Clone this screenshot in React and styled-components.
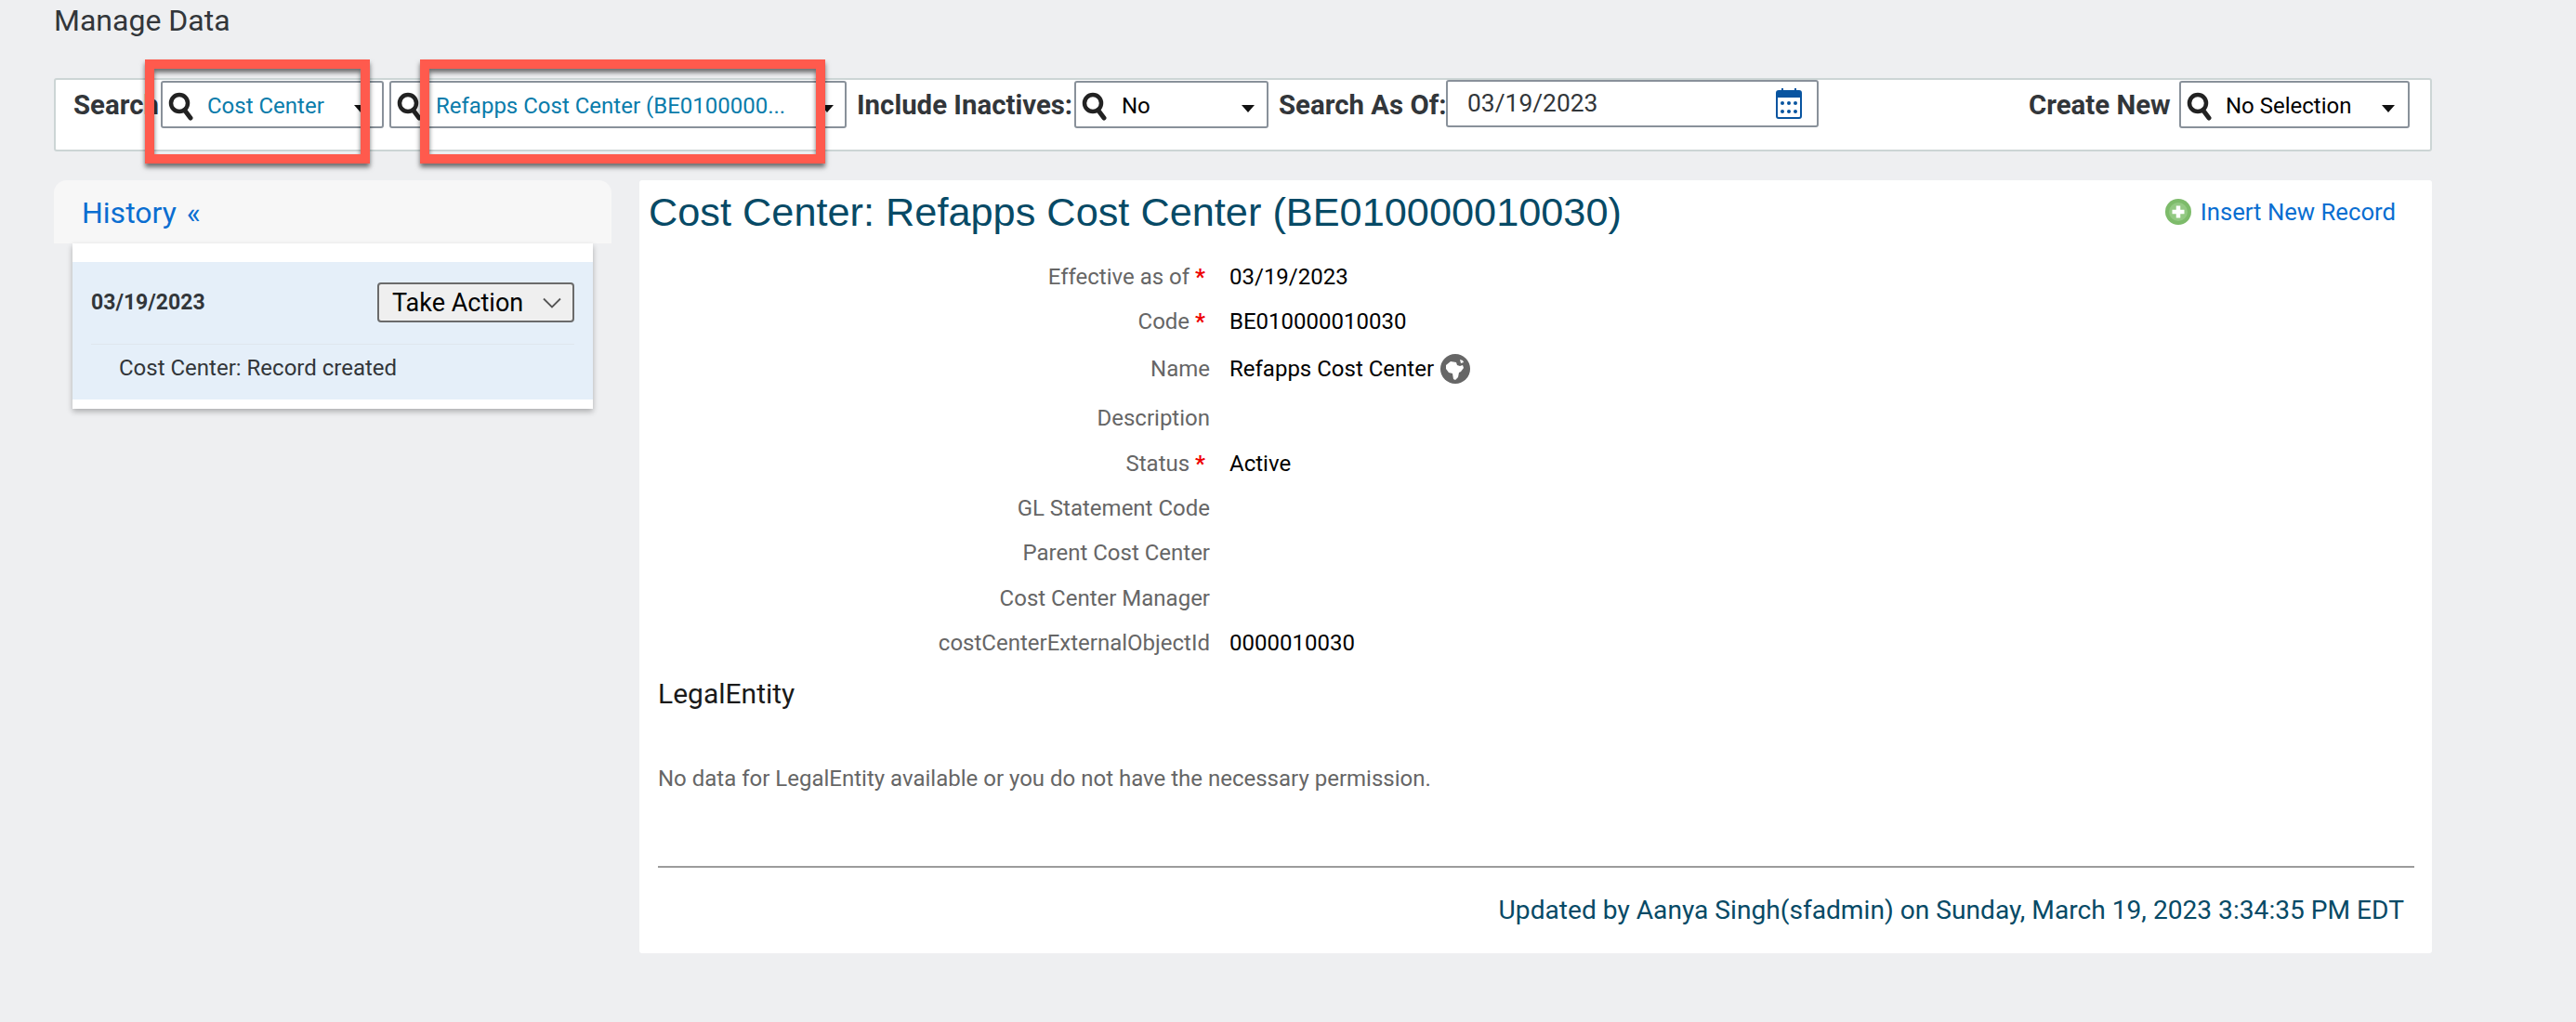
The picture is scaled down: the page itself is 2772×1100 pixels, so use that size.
import React from 'react';
import styled, { createGlobalStyle } from 'styled-components';

const GlobalStyle = createGlobalStyle`
  html, body { margin: 0; padding: 0; background: #eeeff1; }
  body { font-family: Roboto, "Liberation Sans", sans-serif; }
`;

const Page = styled.div`
  width: 2772px;
  height: 1100px;
  position: relative;
  overflow: hidden;
  background: #eeeff1;
`;

const PageTitle = styled.div`
  height: 46px;
  line-height: 45px;
  margin-left: 58px;
  font-size: 32px;
  color: #32363a;
`;

const Toolbar = styled.div`
  box-sizing: border-box;
  width: 2559px;
  height: 79px;
  margin: 38px 0 0 58px;
  padding: 1px 21px 0 19px;
  display: flex;
  align-items: flex-start;
  background: #fff;
  border: 2px solid #ccd5d5;
  border-radius: 3px;
`;

const ToolLabel = styled.div`
  flex: none;
  width: ${p => p.$width}px;
  margin-left: ${p => p.$left || 0}px;
  height: 51px;
  line-height: 53px;
  font-size: 29.4px;
  font-weight: 700;
  color: #32363a;
  white-space: nowrap;
`;

const Select = styled.div`
  flex: none;
  box-sizing: border-box;
  position: relative;
  width: ${p => p.$width}px;
  height: 51px;
  margin-left: ${p => p.$left || 0}px;
  padding: 2px 0 0 ${p => p.$pad}px;
  display: flex;
  align-items: center;
  background: #fff;
  border: 2px solid #89919a;
  border-radius: 3px;
  font-size: 24px;
  color: ${p => (p.$link ? '#0a7cab' : '#000')};
  white-space: nowrap;
`;

const SearchGlass = styled.svg`
  position: absolute;
  left: 6px;
  top: 10px;
  width: 28px;
  height: 31px;
`;

const Caret = styled.span`
  position: absolute;
  right: ${p => p.$right}px;
  top: 24px;
  width: 0;
  height: 0;
  border-left: 7px solid transparent;
  border-right: 7px solid transparent;
  border-top: 8px solid #111;
`;

const DateBox = styled.div`
  flex: none;
  box-sizing: border-box;
  width: 401px;
  height: 51px;
  margin-left: 1px;
  margin-top: -1px;
  padding: 0 16px 1px 21px;
  display: flex;
  align-items: center;
  justify-content: space-between;
  border: 2px solid #89919a;
  border-radius: 3px;
  font-size: 26.4px;
  color: #32363a;
`;

const Columns = styled.div`
  display: flex;
  align-items: flex-start;
  margin: 31px 0 0 58px;
`;

const HistoryColumn = styled.div`
  width: 600px;
  flex: none;
`;

const HistoryHead = styled.div`
  box-sizing: border-box;
  height: 68px;
  padding-left: 30px;
  line-height: 70px;
  font-size: 32px;
  word-spacing: 3px;
  color: #0a6ed1;
  background: #f7f7f7;
  border-radius: 14px 14px 0 0;
`;

const HistoryCard = styled.div`
  margin: 0 20px;
  padding: 20px 0 10px;
  background: #fff;
  box-shadow: 0 3px 6px rgba(0, 0, 0, 0.28);
`;

const HistoryItem = styled.div`
  box-sizing: border-box;
  height: 148px;
  padding: 22px 20px 0;
  background: #e5eff9;
`;

const ItemTop = styled.div`
  display: flex;
  align-items: center;
  justify-content: space-between;
  height: 43px;
  padding-bottom: 23px;
  border-bottom: 1px solid #dfe6ee;
  box-sizing: content-box;
`;

const ItemDate = styled.div`
  font-size: 23px;
  font-weight: 700;
  color: #32363a;
`;

const ActionButton = styled.div`
  box-sizing: border-box;
  width: 212px;
  height: 43px;
  padding: 0 12px 0 14px;
  display: flex;
  align-items: center;
  justify-content: space-between;
  background: #efefef;
  border: 2px solid #6b6b6b;
  border-radius: 4px;
  font-size: 27px;
  color: #000;
`;

const ItemText = styled.div`
  margin: 7px 0 0 30px;
  font-size: 24px;
  line-height: 36px;
  color: #32363a;
`;

const MainPanel = styled.div`
  box-sizing: border-box;
  width: 1929px;
  height: 832px;
  margin-left: 30px;
  padding: 0 19px 0 20px;
  background: #fff;
  border-radius: 3px;
`;

const TitleRow = styled.div`
  display: flex;
  align-items: center;
  justify-content: space-between;
  height: 68px;
  margin-left: -10px;
`;

const RecordTitle = styled.h1`
  margin: 0;
  font-size: 43.3px;
  font-weight: 400;
  color: #074a66;
  font-family: "Liberation Sans", sans-serif;
`;

const InsertLink = styled.div`
  display: flex;
  align-items: center;
  gap: 10px;
  margin-right: 20px;
  font-size: 25.7px;
  color: #0a6ed1;
`;

const FormGrid = styled.div`
  margin: 12px 0 0 -20px;
`;

const FormRow = styled.div`
  display: grid;
  grid-template-columns: 614px auto;
  column-gap: 21px;
  align-items: center;
  height: ${p => p.$height}px;
`;

const FieldLabel = styled.div`
  text-align: right;
  font-size: 24px;
  color: #666;
  padding-right: ${p => (p.$required ? 5 : 0)}px;
`;

const Star = styled.span`
  margin-left: 6px;
  color: #e00;
  font-weight: 700;
`;

const FieldValue = styled.div`
  display: flex;
  align-items: center;
  gap: 7px;
  font-size: 24px;
  color: #000;
`;

const SectionTitle = styled.div`
  margin-top: 10px;
  height: 46px;
  line-height: 46px;
  font-size: 30px;
  color: #1a1a1a;
`;

const EmptyNote = styled.div`
  margin-top: 50px;
  line-height: 36px;
  font-size: 24px;
  color: #666;
`;

const Rule = styled.div`
  height: 2px;
  margin-top: 76px;
  background: #9c9c9c;
`;

const UpdatedBy = styled.div`
  margin-top: 28px;
  padding-right: 11px;
  text-align: right;
  line-height: 36px;
  font-size: 28.15px;
  color: #074a66;
`;

const Highlight = styled.div`
  box-sizing: border-box;
  position: absolute;
  left: ${p => p.$left}px;
  top: 64px;
  width: ${p => p.$width}px;
  height: 112px;
  border: 10px solid #ff5a4d;
  box-shadow: 0 4px 5px rgba(0, 0, 0, 0.55), inset 0 4px 5px rgba(0, 0, 0, 0.55);
`;

const Glass = () => (
  <SearchGlass viewBox="0 0 28 31">
    <circle cx="12" cy="12" r="9" fill="none" stroke="#222" strokeWidth="4.5" />
    <path d="M18 20l6 8" stroke="#222" strokeWidth="5" strokeLinecap="round" />
  </SearchGlass>
);

const CalendarIcon = () => (
  <svg width="28" height="33" viewBox="0 0 28 33">
    <path d="M7 0v4M21 0v4" stroke="#0854a0" strokeWidth="2" />
    <rect x="1" y="3" width="26" height="29" rx="2" fill="none" stroke="#0854a0" strokeWidth="2" />
    <rect x="1" y="3" width="26" height="7" fill="#0854a0" />
    {[7, 14, 21].map(x => [16, 25].map(y => (
      <circle key={`${x}-${y}`} cx={x} cy={y} r="2" fill="#0854a0" />
    )))}
  </svg>
);

const ChevronDown = () => (
  <svg width="20" height="12" viewBox="0 0 20 12">
    <path d="M1 1.5l9 9 9-9" fill="none" stroke="#555" strokeWidth="1.8" />
  </svg>
);

const PlusCircle = () => (
  <svg width="28" height="28" viewBox="0 0 28 28">
    <circle cx="14" cy="14" r="14" fill="#7dbb6a" />
    <circle cx="14" cy="14" r="10" fill="#93c983" />
    <path d="M14 7.5v13M7.5 14h13" stroke="#fff" strokeWidth="4.5" />
  </svg>
);

const GlobeIcon = () => (
  <svg width="32" height="32" viewBox="0 0 32 32">
    <circle cx="16" cy="16" r="16" fill="#666" />
    <path d="M6 12l5-4 6 1 1 3 3 1 3-1 1 3-3 4-2 1-1 5-3 3-2-1-1-6-4-1-3-4z" fill="#fff" />
    <path d="M21 6l3 1 1 2-3 1z" fill="#fff" />
  </svg>
);

const rows = [
  { label: 'Effective as of', required: true, value: '03/19/2023', height: 48 },
  { label: 'Code', required: true, value: 'BE010000010030', height: 48 },
  { label: 'Name', value: 'Refapps Cost Center', globe: true, height: 54 },
  { label: 'Description', height: 52 },
  { label: 'Status', required: true, value: 'Active', height: 46 },
  { label: 'GL Statement Code', height: 50 },
  { label: 'Parent Cost Center', height: 46 },
  { label: 'Cost Center Manager', height: 52 },
  { label: 'costCenterExternalObjectId', value: '0000010030', height: 44 },
];

export default function App() {
  return (
    <Page>
      <GlobalStyle />
      <PageTitle>Manage Data</PageTitle>

      <Toolbar>
        <ToolLabel $width={94}>Search</ToolLabel>
        <Select $width={240} $pad={48} $link>
          <Glass />
          Cost Center
          <Caret $right={16} />
        </Select>
        <Select $width={492} $left={6} $pad={48} $link>
          <Glass />
          Refapps Cost Center (BE0100000...
          <Caret $right={12} />
        </Select>
        <ToolLabel $width={230} $left={11}>Include Inactives:</ToolLabel>
        <Select $width={209} $left={4} $pad={49}>
          <Glass />
          No
          <Caret $right={13} />
        </Select>
        <ToolLabel $width={179} $left={11}>Search As Of:</ToolLabel>
        <DateBox>
          03/19/2023
          <CalendarIcon />
        </DateBox>
        <ToolLabel $width={152} $left={226}>Create New</ToolLabel>
        <Select $width={248} $left={10} $pad={48}>
          <Glass />
          No Selection
          <Caret $right={14} />
        </Select>
      </Toolbar>

      <Columns>
        <HistoryColumn>
          <HistoryHead>History «</HistoryHead>
          <HistoryCard>
            <HistoryItem>
              <ItemTop>
                <ItemDate>03/19/2023</ItemDate>
                <ActionButton>
                  Take Action
                  <ChevronDown />
                </ActionButton>
              </ItemTop>
              <ItemText>Cost Center: Record created</ItemText>
            </HistoryItem>
          </HistoryCard>
        </HistoryColumn>

        <MainPanel>
          <TitleRow>
            <RecordTitle>Cost Center: Refapps Cost Center (BE010000010030)</RecordTitle>
            <InsertLink>
              <PlusCircle />
              Insert New Record
            </InsertLink>
          </TitleRow>

          <FormGrid>
            {rows.map(row => (
              <FormRow key={row.label} $height={row.height}>
                <FieldLabel $required={row.required}>
                  {row.label}
                  {row.required && <Star>*</Star>}
                </FieldLabel>
                <FieldValue>
                  {row.value}
                  {row.globe && <GlobeIcon />}
                </FieldValue>
              </FormRow>
            ))}
          </FormGrid>

          <SectionTitle>LegalEntity</SectionTitle>
          <EmptyNote>No data for LegalEntity available or you do not have the necessary permission.</EmptyNote>
          <Rule />
          <UpdatedBy>Updated by Aanya Singh(sfadmin) on Sunday, March 19, 2023 3:34:35 PM EDT</UpdatedBy>
        </MainPanel>
      </Columns>

      <Highlight $left={156} $width={242} />
      <Highlight $left={452} $width={436} />
    </Page>
  );
}
